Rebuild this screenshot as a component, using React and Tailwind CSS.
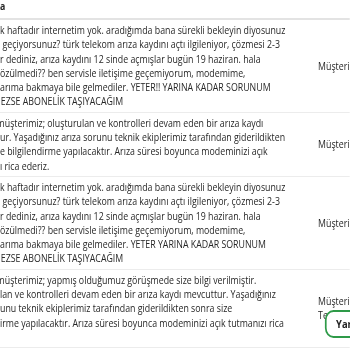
import React from 'react';

const rows = [
  {
    who: ['Müşteri'],
    lines: [
      [0, 'k haftadır internetim yok. aradığımda bana sürekli bekleyin diyosunuz'],
      [3, 'geçiyorsunuz? türk telekom arıza kaydını açtı ilgileniyor, çözmesi 2-3'],
      [0, 'r dediniz, arıza kaydını 12 sinde açmışlar bugün 19 haziran. hala'],
      [0, 'özülmedi?? ben servisle iletişime geçemiyorum, modemime,'],
      [0, 'arıma bakmaya bile gelmediler. YETER!! YARINA KADAR SORUNUM'],
      [1, 'EZSE ABONELİK TAŞIYACAĞIM'],
    ],
  },
  {
    who: ['Müşteri'],
    lines: [
      [-4, 'müşterimiz; oluşturulan ve kontrolleri devam eden bir arıza kaydı'],
      [0, 'ur. Yaşadığınız arıza sorunu teknik ekiplerimiz tarafından giderildikten'],
      [0, 'e bilgilendirme yapılacaktır. Arıza süresi boyunca modeminizi açık'],
      [0, 'ı rica ederiz.'],
    ],
  },
  {
    who: ['Müşteri'],
    lines: [
      [0, 'k haftadır internetim yok. aradığımda bana sürekli bekleyin diyosunuz'],
      [3, 'geçiyorsunuz? türk telekom arıza kaydını açtı ilgileniyor, çözmesi 2-3'],
      [0, 'r dediniz, arıza kaydını 12 sinde açmışlar bugün 19 haziran. hala'],
      [0, 'özülmedi?? ben servisle iletişime geçemiyorum, modemime,'],
      [0, 'arıma bakmaya bile gelmediler. YETER YARINA KADAR SORUNUM'],
      [1, 'EZSE ABONELİK TAŞIYACAĞIM'],
    ],
  },
  {
    who: ['Müşteri', 'Temsilcisi'],
    lines: [
      [-4, 'müşterimiz; yapmış olduğumuz görüşmede size bilgi verilmiştir.'],
      [0, 'lan ve kontrolleri devam eden bir arıza kaydı mevcuttur. Yaşadığınız'],
      [0, 'unu teknik ekiplerimiz tarafından giderildikten sonra size'],
      [0, 'irme yapılacaktır. Arıza süresi boyunca modeminizi açık tutmanızı rica'],
      [0, ''],
    ],
  },
];

export default function App() {
  return (
    <div className="w-[350px] h-[350px] overflow-hidden bg-white">
      {/* page is squeezed horizontally, as in the capture */}
      <div
        className="relative w-[409px] origin-left scale-x-[0.855] text-[#262626] text-[10.3px] leading-[14.3px]"
        style={{ fontFamily: '"Open Sans", "Liberation Sans", sans-serif' }}
      >
        <div className="flex h-[20px] border-b-2 border-[#e3e3e3]">
          <div className="w-[372px] font-bold leading-[12px]">a</div>
          <div className="flex-1" />
        </div>

        {rows.map((r, i) => (
          <div key={i} className="flex items-center border-b border-[#ececec] py-[3px]">
            <div className="w-[372px] shrink-0 overflow-hidden">
              {r.lines.map(([off, t], j) => (
                <div key={j} className="whitespace-pre h-[14.3px]" style={{ marginLeft: off }}>
                  {t}
                </div>
              ))}
            </div>
            <div className="flex-1 whitespace-nowrap">
              {r.who.map((w) => (
                <div key={w}>{w}</div>
              ))}
            </div>
          </div>
        ))}

        <button className="absolute left-[380px] top-[310px] h-[28px] w-[90px] rounded-[10px] border-2 border-[#2e9a48] bg-white pl-[11px] text-left text-[11px] font-bold text-[#222]">
          Yardım
        </button>
      </div>
    </div>
  );
}
